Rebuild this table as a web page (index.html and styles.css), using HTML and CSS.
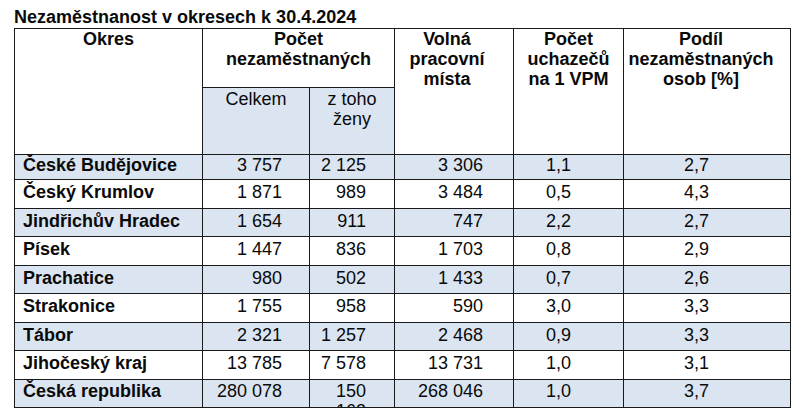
FILE: index.html
```html
<!DOCTYPE html>
<html lang="cs">
<head>
<meta charset="utf-8">
<title>Nezaměstnanost v okresech</title>
<link rel="stylesheet" href="styles.css">
</head>
<body>
<div class="page">
  <div class="title">Nezaměstnanost v okresech k 30.4.2024</div>
  <table class="data">
    <colgroup>
      <col class="c1"><col class="c2"><col class="c3"><col class="c4"><col class="c5"><col class="c6">
    </colgroup>
    <thead>
      <tr class="h1">
        <th rowspan="2">Okres</th>
        <th colspan="2">Počet<br>nezaměstnaných</th>
        <th rowspan="2" class="hv">Volná<br>pracovní<br>místa</th>
        <th rowspan="2">Počet<br>uchazečů<br>na 1 VPM</th>
        <th rowspan="2" class="hp">Podíl<br>nezaměstnaných<br>osob [%]</th>
      </tr>
      <tr class="h2">
        <th class="sub">Celkem</th>
        <th class="sub">z toho<br>ženy</th>
      </tr>
    </thead>
    <tbody>
      <tr class="alt first"><td>České Budějovice</td><td>3 757</td><td>2 125</td><td>3 306</td><td>1,1</td><td>2,7</td></tr>
      <tr><td>Český Krumlov</td><td>1 871</td><td>989</td><td>3 484</td><td>0,5</td><td>4,3</td></tr>
      <tr class="alt"><td>Jindřichův Hradec</td><td>1 654</td><td>911</td><td>747</td><td>2,2</td><td>2,7</td></tr>
      <tr><td>Písek</td><td>1 447</td><td>836</td><td>1 703</td><td>0,8</td><td>2,9</td></tr>
      <tr class="alt"><td>Prachatice</td><td>980</td><td>502</td><td>1 433</td><td>0,7</td><td>2,6</td></tr>
      <tr><td>Strakonice</td><td>1 755</td><td>958</td><td>590</td><td>3,0</td><td>3,3</td></tr>
      <tr class="alt"><td>Tábor</td><td>2 321</td><td>1 257</td><td>2 468</td><td>0,9</td><td>3,3</td></tr>
      <tr><td>Jihočeský kraj</td><td>13 785</td><td>7 578</td><td>13 731</td><td>1,0</td><td>3,1</td></tr>
      <tr class="alt last"><td>Česká republika</td><td>280 078</td><td><div class="clip">150<br>163</div></td><td>268 046</td><td>1,0</td><td>3,7</td></tr>
    </tbody>
  </table>
</div>
</body>
</html>
```

FILE: styles.css
```css
html, body {
  margin: 0;
  padding: 0;
  background: #ffffff;
}

body {
  font-family: "Liberation Sans", Arial, sans-serif;
  font-size: 18px;
  line-height: 20px;
  color: #0a0a0a;
}

.page {
  padding: 7px 0 0 14px;
}

.title {
  font-weight: bold;
  height: 21px;
}

.data {
  border-collapse: collapse;
  table-layout: fixed;
  width: 776px;
}

.c1 { width: 188px; }
.c2 { width: 107px; }
.c3 { width: 85px; }
.c4 { width: 119px; }
.c5 { width: 110px; }
.c6 { width: 167px; }

.data th,
.data td {
  border: 1px solid #1a1a1a;
  padding: 0;
  vertical-align: top;
}

.data th {
  font-weight: bold;
  text-align: center;
}

.h1 { height: 59px; }
.h2 { height: 67px; }

.data th.sub {
  font-weight: normal;
  background: #dbe5f1;
  padding-top: 1px;
}

.data th.hv { padding-right: 14px; }
.data th.hp { padding-right: 12px; }

.data tbody tr { height: 28.5px; }
.data tbody tr.first { height: 25px; }

.data tbody td {
  padding-top: 2px;
  border-top-color: #333;
}

.data tbody tr.first td { padding-top: 0; }

.data tbody tr.alt td { background: #dbe5f1; }

.data tbody td:nth-child(1) {
  font-weight: bold;
  text-align: left;
  padding-left: 8px;
}

.data tbody td:nth-child(2) { text-align: right; padding-right: 27px; }
.data tbody td:nth-child(3) { text-align: right; padding-right: 28px; }
.data tbody td:nth-child(4) { text-align: right; padding-right: 30px; }
.data tbody td:nth-child(5) { text-align: center; padding-right: 20px; }
.data tbody td:nth-child(6) { text-align: center; padding-right: 21px; }

.data tbody tr.last td { padding-top: 1px; }

.clip {
  height: 26px;
  overflow: hidden;
}
```
